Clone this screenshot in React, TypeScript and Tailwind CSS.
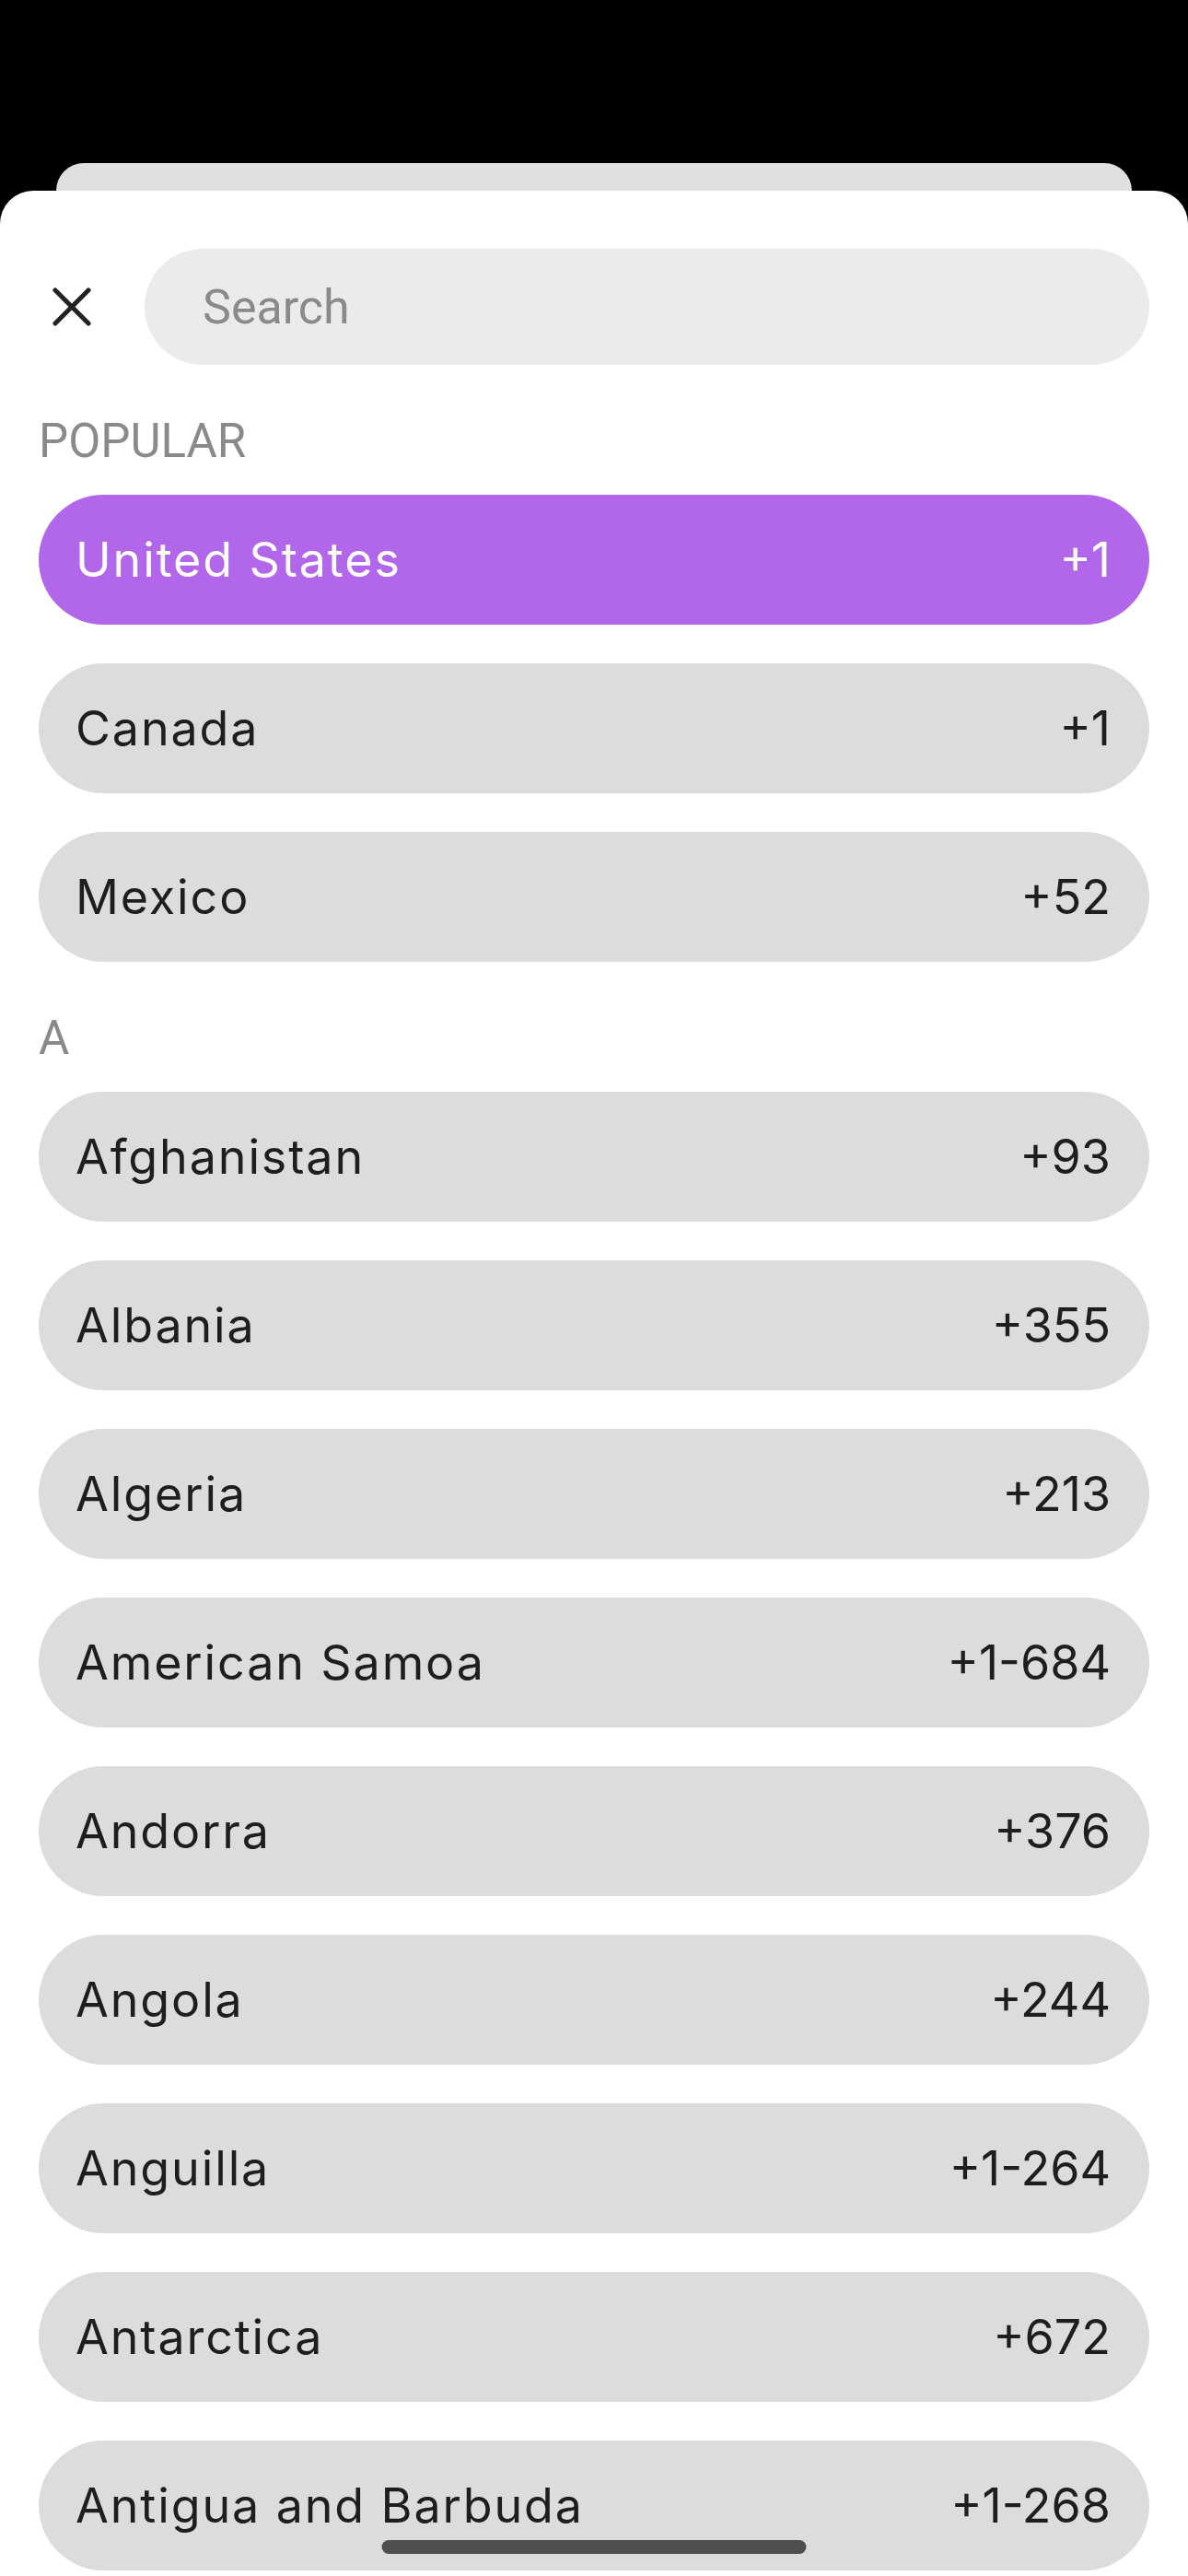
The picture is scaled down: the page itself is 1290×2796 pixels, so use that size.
import React from "react";

type Country = { name: string; code: string };

const popular: Country[] = [
  { name: "United States", code: "+1" },
  { name: "Canada", code: "+1" },
  { name: "Mexico", code: "+52" },
];

const aList: Country[] = [
  { name: "Afghanistan", code: "+93" },
  { name: "Albania", code: "+355" },
  { name: "Algeria", code: "+213" },
  { name: "American Samoa", code: "+1-684" },
  { name: "Andorra", code: "+376" },
  { name: "Angola", code: "+244" },
  { name: "Anguilla", code: "+1-264" },
  { name: "Antarctica", code: "+672" },
  { name: "Antigua and Barbuda", code: "+1-268" },
];

const rowFont = { fontFamily: "Inter, 'Noto Sans', sans-serif" };
const labelFont = { fontFamily: "Roboto, 'Liberation Sans', sans-serif" };

function Header({ label }: { label: string }) {
  return (
    <div
      className="h-[141px] pt-[53px] text-[51px] leading-[60px] text-[#8a8a8a]"
      style={labelFont}
    >
      {label}
    </div>
  );
}

function Row({ c, selected }: { c: Country; selected?: boolean }) {
  return (
    <div
      className={
        selected
          ? "flex h-[141px] shrink-0 items-center justify-between rounded-full bg-[#b266e9] pl-[40px] pr-[42px] text-[52px] text-white"
          : "flex h-[141px] shrink-0 items-center justify-between rounded-full bg-[#dcdcdc] pl-[40px] pr-[42px] text-[52px] text-[#1e1e1e]"
      }
      style={rowFont}
    >
      <span className="whitespace-nowrap tracking-[0.036em]">{c.name}</span>
      <span className="whitespace-nowrap">{c.code}</span>
    </div>
  );
}

export default function App() {
  return (
    <div className="relative h-[2796px] w-[1290px] overflow-hidden bg-black">
      <div className="pt-[177px]">
        <div className="mx-[61px] h-[30px] rounded-t-[30px] bg-[#e0e0e0]" />
        <div className="h-[2589px] rounded-t-[36px] bg-white px-[42px] pt-[63px]">
          <div className="flex items-center">
            <div className="flex w-[115px] shrink-0 items-center">
              <svg
                className="ml-[15px]"
                width="42"
                height="42"
                viewBox="0 0 42 42"
                fill="none"
                stroke="#222222"
                strokeWidth="5"
                strokeLinecap="round"
              >
                <line x1="3" y1="3" x2="39" y2="39" />
                <line x1="39" y1="3" x2="3" y2="39" />
              </svg>
            </div>
            <input
              className="h-[126px] flex-1 rounded-full bg-[#ebebeb] pl-[63px] text-[52px] text-[#1e1e1e] outline-none placeholder:text-[#8a8a8a]"
              style={labelFont}
              placeholder="Search"
            />
          </div>

          <Header label="POPULAR" />
          <div className="flex flex-col gap-[42px]">
            {popular.map((c, i) => (
              <Row key={c.name} c={c} selected={i === 0} />
            ))}
          </div>

          <Header label="A" />
          <div className="flex flex-col gap-[42px]">
            {aList.map((c) => (
              <Row key={c.name} c={c} />
            ))}
          </div>
        </div>
      </div>
      <div className="absolute bottom-[24px] left-1/2 h-[15px] w-[461px] -translate-x-1/2 rounded-full bg-[#4f4f4f]" />
    </div>
  );
}
